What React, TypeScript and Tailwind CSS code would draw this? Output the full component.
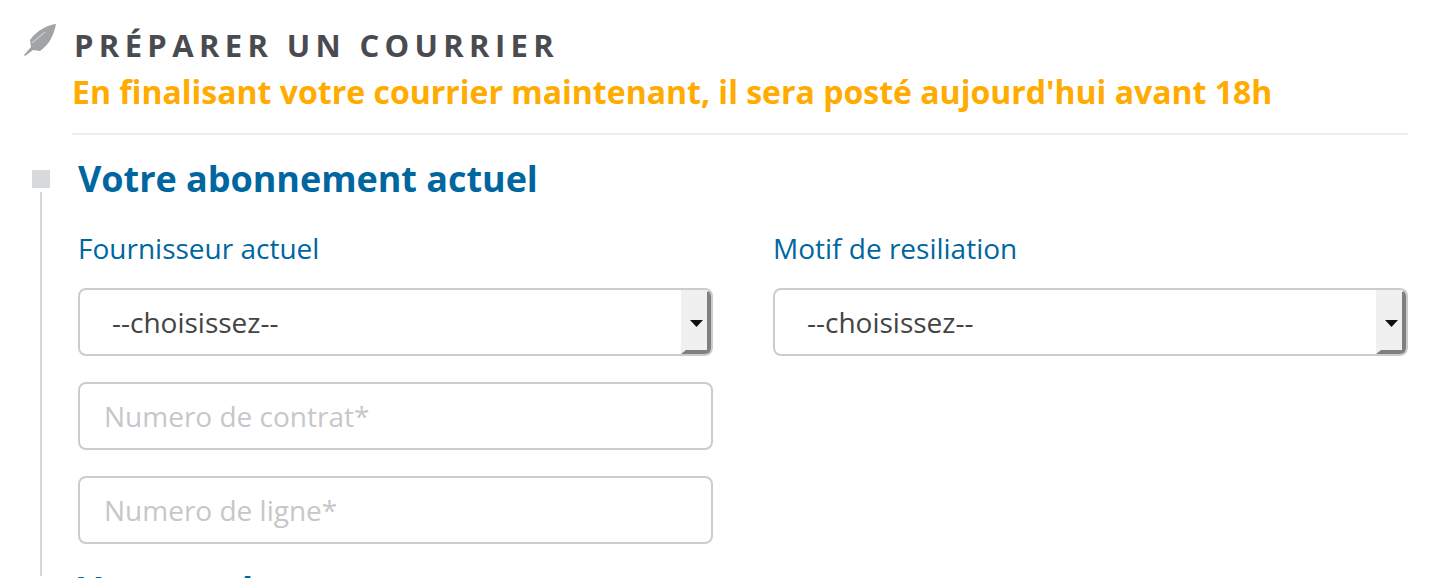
const font = "font-['Open_Sans',sans-serif]";

function Feather() {
  return (
    <svg viewBox="0 0 34 34" className="w-[34px] h-[34px] shrink-0 mt-[23px] ml-[23px]" aria-hidden="true">
      <path d="M33 1 C25 2 14 7 7 17 L8 24 L1 32 L2 33 L10 27 L17 28 C26 22 31 12 33 1 Z" fill="#a2a3a5" />
      <path d="M9 20 L22 9" stroke="#c9cacb" strokeWidth="1.2" fill="none" />
    </svg>
  );
}

function Select() {
  return (
    <div className="w-[635px] h-[68px] rounded-lg border-2 border-[#cccccc] bg-white flex items-stretch overflow-hidden">
      <div className="flex-1 pl-[32px] flex items-center text-[28px] text-[#444444]">--choisissez--</div>
      <div className="w-[30px] bg-[#f0f0f0] border-t-[2px] border-t-[#f0f0f0] border-l-[5px] border-l-[#f0f0f0] border-r-[4px] border-r-[#808080] border-b-[4px] border-b-[#808080] flex items-center justify-center">
        <svg viewBox="0 0 13 8" className="w-[13px] h-[8px] shrink-0 mt-[3px] mr-[1px]" aria-hidden="true">
          <path d="M0 1 H13 L6.5 8 Z" fill="#111111" />
        </svg>
      </div>
    </div>
  );
}

function TextInput({ text }: { text: string }) {
  return (
    <div className="w-[635px] h-[68px] rounded-lg border-2 border-[#cccccc] bg-white flex items-center pl-[24px] text-[28px] text-[#c6c7ca]">
      {text}
    </div>
  );
}

export default function App() {
  return (
    <div className={`${font} w-[1450px] h-[578px] overflow-hidden bg-white flex`}>
      <div className="w-[72px] shrink-0 flex flex-col">
        <Feather />
        <div className="w-[18px] h-[18px] bg-[#d8d9db] ml-[32px] mt-[113px]" />
        <div className="w-[2px] h-[384px] bg-[#d5d5d5] ml-[40px] mt-[4px]" />
      </div>
      <div className="w-[1336px] shrink-0">
        <h1 className="text-[31px] leading-[40px] font-bold tracking-[5.35px] text-[#4a4b51] mt-[25px] ml-[2px]">PRÉPARER UN COURRIER</h1>
        <p className="text-[32px] leading-[44px] font-bold text-[#ffab00] mt-[5px]">En finalisant votre courrier maintenant, il sera posté aujourd'hui avant 18h</p>
        <div className="h-[2px] bg-[#eeeeee] mt-[19px]" />
        <h2 className="text-[36px] leading-[48px] font-bold text-[#00669f] ml-[6px] mt-[20px] tracking-[-0.04px]">Votre abonnement actuel</h2>
        <div className="ml-[6px] mt-[25px] flex gap-[60px]">
          <div className="flex flex-col">
            <div className="text-[28px] leading-[40px] text-[#00669f]">Fournisseur actuel</div>
            <div className="mt-[20px]"><Select /></div>
            <div className="mt-[26px]"><TextInput text="Numero de contrat*" /></div>
            <div className="mt-[26px]"><TextInput text="Numero de ligne*" /></div>
          </div>
          <div className="flex flex-col">
            <div className="text-[28px] leading-[40px] text-[#00669f]">Motif de resiliation</div>
            <div className="mt-[20px]"><Select /></div>
          </div>
        </div>
        <h2 className="text-[36px] leading-[48px] font-bold text-[#00669f] ml-[6px] mt-[22px]">Vos coordonnees</h2>
      </div>
    </div>
  );
}
